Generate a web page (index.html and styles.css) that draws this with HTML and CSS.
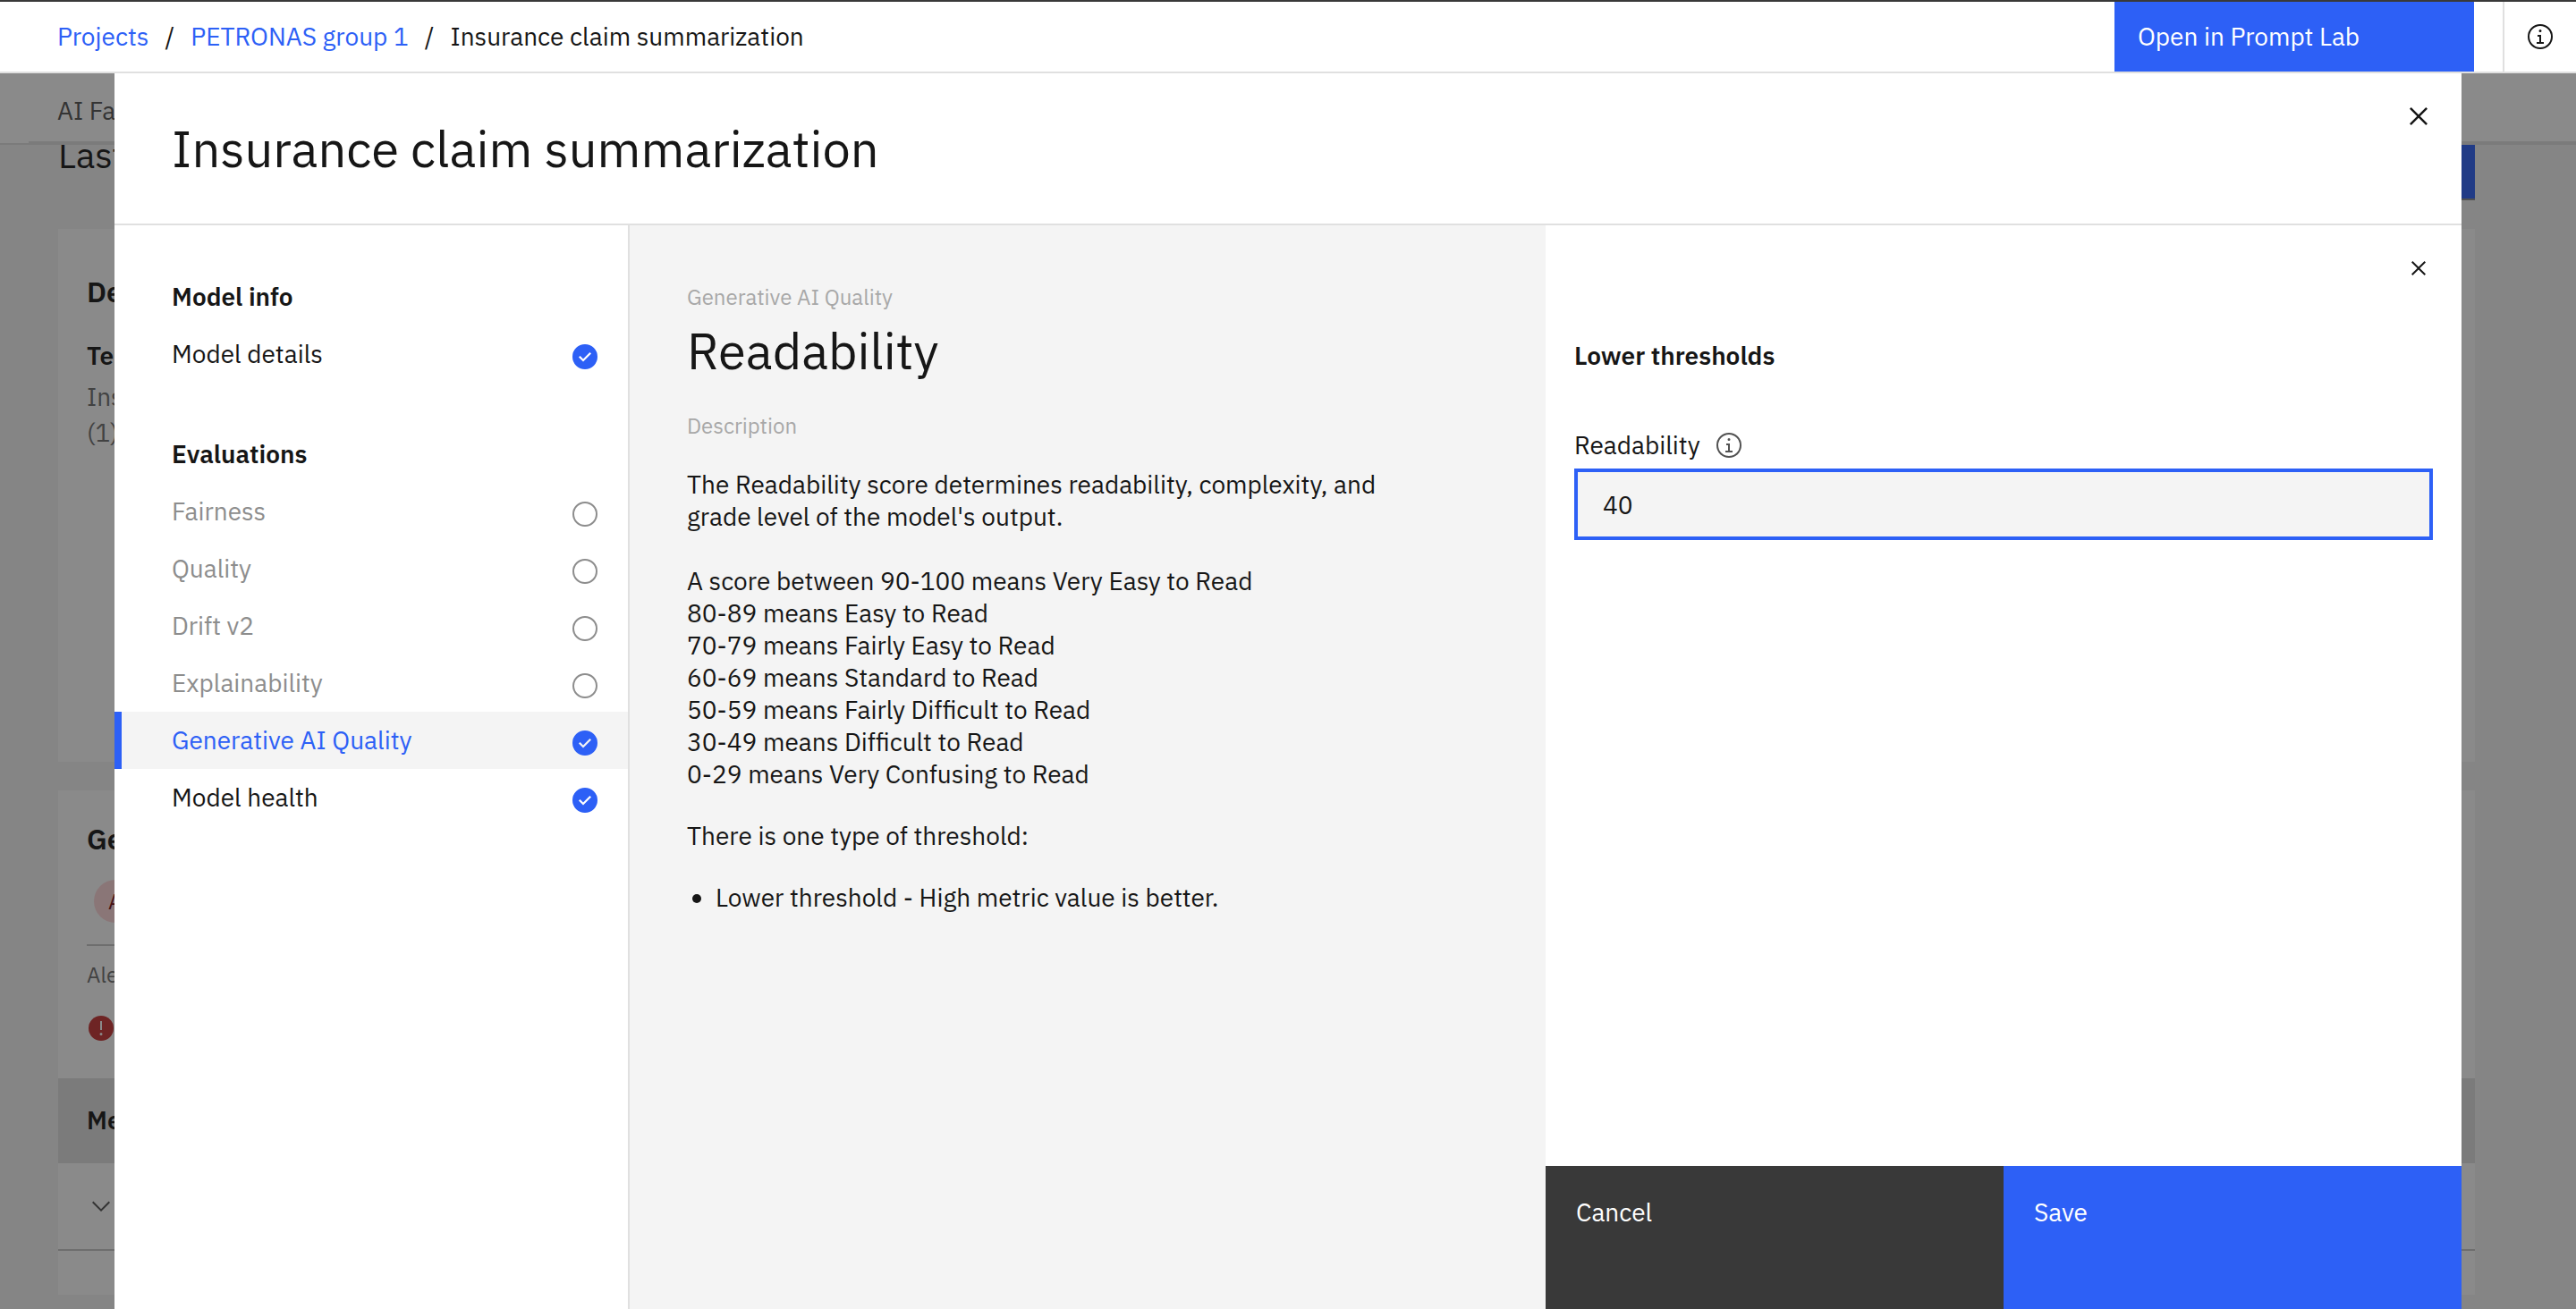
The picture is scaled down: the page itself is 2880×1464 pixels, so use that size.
FILE: index.html
```html
<!DOCTYPE html>
<html lang="en">
<head>
<meta charset="utf-8">
<title>Insurance claim summarization</title>
<link rel="stylesheet" href="styles.css">
</head>
<body>
<svg width="0" height="0" class="sprite" aria-hidden="true">
  <symbol id="close" viewBox="0 0 32 32"><path d="M24 9.4L22.6 8 16 14.6 9.4 8 8 9.4l6.6 6.6L8 22.6 9.4 24l6.6-6.6 6.6 6.6 1.4-1.4-6.6-6.6z"/></symbol>
  <symbol id="info" viewBox="0 0 32 32"><path d="M17 22v-8h-4v2h2v6h-3v2h8v-2zM16 8a1.5 1.5 0 1 0 1.5 1.5A1.5 1.5 0 0 0 16 8z"/><path d="M16 30A14 14 0 1 1 30 16 14 14 0 0 1 16 30zM16 4a12 12 0 1 0 12 12A12 12 0 0 0 16 4z"/></symbol>
  <symbol id="done" viewBox="0 0 32 32"><path d="M16 2a14 14 0 1 0 14 14A14 14 0 0 0 16 2zm-2 19.6l-5-5L10.6 15l3.4 3.4 7.4-7.4 1.6 1.6z"/></symbol>
  <symbol id="todo" viewBox="0 0 32 32"><circle cx="16" cy="16" r="13" fill="none" stroke="currentColor" stroke-width="2"/></symbol>
  <symbol id="error" viewBox="0 0 32 32"><circle cx="16" cy="16" r="14"/><path fill="#fff" d="M15 8h2v10h-2zM16 21a1.5 1.5 0 1 1 0 3 1.5 1.5 0 0 1 0-3z"/></symbol>
  <symbol id="chevron" viewBox="0 0 32 32"><path d="M16 22L6 12l1.4-1.4 8.6 8.6 8.6-8.6L26 12z"/></symbol>
</svg>

<header class="topbar">
  <nav class="crumbs" aria-label="Breadcrumb">
    <a href="#">Projects</a><span>/</span><a href="#">PETRONAS group 1</a><span>/</span><span>Insurance claim summarization</span>
  </nav>
  <button class="open-lab" type="button">Open in Prompt Lab</button>
  <button class="top-info" type="button" aria-label="Information"><svg class="icon"><use href="#info"/></svg></button>
</header>

<div class="stage">
  <div class="page">
    <nav class="tabs"><span class="tab">AI Fa</span></nav>
    <div class="page-body">
      <div class="summary">
        <span class="summary-text">Last</span>
        <span class="summary-action"></span>
      </div>
      <section class="card details">
        <h2>De</h2>
        <h3>Te</h3>
        <p>Ins<br>(1)</p>
      </section>
      <section class="card quality">
        <div class="quality-head">
          <h2>Ge</h2>
          <span class="tag">A</span>
        </div>
        <div class="alerts">
          <span>Ale</span>
          <svg class="icon"><use href="#error"/></svg>
        </div>
        <div class="metric-head">Me</div>
        <div class="metric-row"><svg class="icon"><use href="#chevron"/></svg></div>
        <div class="metric-end"></div>
      </section>
    </div>
  </div>

  <div class="overlay">
    <div class="modal" role="dialog" aria-labelledby="modal-title">
      <header class="modal-head">
        <h1 id="modal-title">Insurance claim summarization</h1>
        <button class="modal-close" type="button" aria-label="Close"><svg><use href="#close"/></svg></button>
      </header>
      <div class="modal-body">
        <nav class="steps">
          <h2>Model info</h2>
          <ul>
            <li><a href="#">Model details<svg class="icon"><use href="#done"/></svg></a></li>
          </ul>
          <h2>Evaluations</h2>
          <ul>
            <li><a class="pending" href="#">Fairness<svg class="icon"><use href="#todo"/></svg></a></li>
            <li><a class="pending" href="#">Quality<svg class="icon"><use href="#todo"/></svg></a></li>
            <li><a class="pending" href="#">Drift v2<svg class="icon"><use href="#todo"/></svg></a></li>
            <li><a class="pending" href="#">Explainability<svg class="icon"><use href="#todo"/></svg></a></li>
            <li><a class="current" href="#" aria-current="step">Generative AI Quality<svg class="icon"><use href="#done"/></svg></a></li>
            <li><a href="#">Model health<svg class="icon"><use href="#done"/></svg></a></li>
          </ul>
        </nav>

        <main class="about">
          <p class="label">Generative AI Quality</p>
          <h2>Readability</h2>
          <p class="label">Description</p>
          <div class="prose">
            <p>The Readability score determines readability, complexity, and grade level of the model's output.<br><br>A score between 90-100 means Very Easy to Read<br>80-89 means Easy to Read<br>70-79 means Fairly Easy to Read<br>60-69 means Standard to Read<br>50-59 means Fairly Difficult to Read<br>30-49 means Difficult to Read<br>0-29 means Very Confusing to Read</p>
            <p>There is one type of threshold:</p>
            <ul><li>Lower threshold - High metric value is better.</li></ul>
          </div>
        </main>

        <form class="editor">
          <div class="fields">
            <button class="panel-close" type="button" aria-label="Close panel"><svg class="icon"><use href="#close"/></svg></button>
            <h3>Lower thresholds</h3>
            <div class="field-label">
              <label for="readability">Readability</label>
              <button type="button" aria-label="About readability"><svg class="icon"><use href="#info"/></svg></button>
            </div>
            <input id="readability" type="text" inputmode="numeric" value="40">
          </div>
          <div class="actions">
            <button class="cancel" type="button">Cancel</button>
            <button class="save" type="submit">Save</button>
          </div>
        </form>
      </div>
    </div>
  </div>
</div>
</body>
</html>
```
FILE: styles.css
```css
:root {
  --text: #161616;
  --blue: #2d60f6;
  --line: #e0e0e0;
  --layer: #f4f4f4;
}

* { box-sizing: border-box; }

body {
  margin: 0;
  min-height: 100vh;
  display: flex;
  flex-direction: column;
  font-family: "IBM Plex Sans", "Open Sans", sans-serif;
  font-size: 28px;
  line-height: 36px;
  color: var(--text);
  background: #fff;
}

h1, h2, h3, p, ul { margin: 0; padding: 0; }
ul { list-style: none; }
a { color: inherit; text-decoration: none; }

button {
  margin: 0;
  padding: 0;
  border: 0;
  background: none;
  color: inherit;
  font: inherit;
  text-align: left;
}

svg { display: block; fill: currentColor; }
.sprite { position: absolute; }
.icon { width: 32px; height: 32px; flex: none; }

/* Top bar */
.topbar {
  display: flex;
  align-items: stretch;
  height: 82px;
  border-top: 2px solid #393939;
  border-bottom: 2px solid var(--line);
}
.crumbs {
  flex: 1;
  display: flex;
  align-items: center;
  gap: 18px;
  padding-left: 64px;
}
.crumbs a { color: var(--blue); }
.open-lab {
  width: 402px;
  margin-right: 32px;
  padding-left: 26px;
  background: var(--blue);
  color: #fff;
}
.top-info {
  display: flex;
  align-items: center;
  justify-content: center;
  width: 82px;
  border-left: 2px solid var(--line);
}

/* The page and the dialog share one grid cell */
.stage {
  flex: 1;
  display: grid;
}
.page, .overlay { grid-area: 1 / 1; min-width: 0; }
.page { background: var(--layer); overflow: hidden; }

.tabs {
  display: flex;
  height: 80px;
  padding-left: 32px;
  background: #fff;
  border-bottom: 2px solid var(--line);
}
.tab {
  flex: 1;
  padding: 24px 32px 0;
  border-bottom: 2px solid var(--line);
  color: #525252;
}
.page-body { padding: 0 113px 16px 65px; }
.summary {
  display: flex;
  justify-content: space-between;
  height: 94px;
  overflow: hidden;
}
.summary-text { font-size: 40px; line-height: 22px; }
.summary-action {
  width: 240px;
  height: 62px;
  background: var(--blue);
  border-bottom: 2px solid #8d8d8d;
}
.card { background: #fff; }
.card h2 { font-size: 32px; line-height: 40px; font-weight: 600; }
.details { height: 596px; padding: 50px 32px; margin-bottom: 32px; }
.details h3 { margin-top: 34px; font-size: 28px; line-height: 36px; font-weight: 600; }
.details p { margin-top: 8px; line-height: 40px; color: #6f6f6f; }
.quality-head { margin: 0 32px; padding: 34px 0 24px; border-bottom: 2px solid #c6c6c6; }
.tag {
  display: block;
  width: 144px;
  margin: 26px 8px 0;
  padding: 0 16px;
  border-radius: 24px;
  background: #ffd7d9;
  color: #750e13;
  font-size: 24px;
  line-height: 48px;
}
.alerts {
  display: flex;
  flex-direction: column;
  gap: 28px;
  height: 148px;
  padding: 16px 32px 0;
  color: #c63232;
}
.alerts span { font-size: 24px; line-height: 32px; color: #6f6f6f; }
.metric-head {
  padding: 29px 32px 30px;
  background: var(--line);
  font-weight: 600;
}
.metric-row { padding: 32px; border-bottom: 2px solid #c6c6c6; color: #525252; }
.metric-end { height: 49px; }

/* Dialog */
.overlay {
  display: flex;
  padding: 0 128px;
  background: rgba(22, 22, 22, 0.5);
}
.modal {
  flex: 1;
  display: flex;
  flex-direction: column;
  background: #fff;
}
.modal-head {
  display: flex;
  align-items: center;
  justify-content: space-between;
  height: 170px;
  padding: 0 28px 0 64px;
  border-bottom: 2px solid var(--line);
}
.modal-head h1 { font-size: 56px; line-height: 64px; font-weight: 400; }
.modal-close { align-self: flex-start; padding-top: 28px; }
.modal-close svg { width: 40px; height: 40px; }
.modal-body {
  flex: 1;
  display: grid;
  grid-template-columns: 576px 1fr 1fr;
}

.steps {
  padding-top: 48px;
  border-right: 2px solid var(--line);
}
.steps h2 { padding-left: 64px; font-size: 28px; line-height: 64px; font-weight: 600; }
.steps ul + h2 { margin-top: 48px; }
.steps a {
  display: flex;
  justify-content: space-between;
  padding: 0 32px 0 56px;
  border-left: 8px solid transparent;
  line-height: 64px;
}
.steps .icon { margin-top: 19px; color: var(--blue); }
.steps .pending, .steps .pending .icon { color: #8d8d8d; }
.steps .current { border-color: var(--blue); background: var(--layer); color: var(--blue); }

.about {
  padding: 64px 64px 0;
  background: var(--layer);
}
.about .label { font-size: 24px; line-height: 32px; color: #a8a8a8; }
.about h2 { margin: 12px 0 36px; font-size: 56px; line-height: 64px; font-weight: 400; }
.prose {
  display: flex;
  flex-direction: column;
  gap: 33px;
  max-width: 840px;
  margin-top: 32px;
}
.prose ul { padding-left: 32px; list-style: disc; }

.editor { display: flex; flex-direction: column; }
.fields { flex: 1; display: flex; flex-direction: column; padding: 32px; }
.panel-close { align-self: flex-end; }
.fields h3 { margin-top: 64px; font-size: 28px; line-height: 36px; font-weight: 600; }
.field-label { display: flex; align-items: center; gap: 16px; margin: 64px 0 8px; }
.field-label button { color: #525252; }
.fields input {
  width: 100%;
  height: 80px;
  padding: 0 28px;
  border: 4px solid var(--blue);
  border-radius: 0;
  outline: 0;
  background: var(--layer);
  color: inherit;
  font: inherit;
}
.actions { display: flex; height: 160px; color: #fff; }
.actions button {
  flex: 1;
  display: flex;
  padding: 34px;
}
.cancel { background: #393939; }
.save { background: var(--blue); }
```
